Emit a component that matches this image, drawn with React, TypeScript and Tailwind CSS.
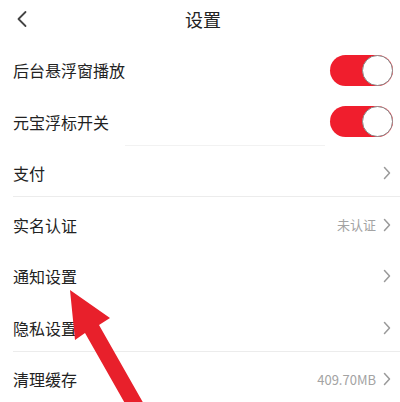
import React from "react";

const font = { fontFamily: '"Noto Sans CJK SC", "Noto Sans", sans-serif' };

function Chevron() {
  return (
    <svg width="10" height="14" viewBox="0 0 10 14" className="shrink-0">
      <path d="M2.5 1.5 L7.5 7 L2.5 12.5" fill="none" stroke="#9a9a9a" strokeWidth="1.5" strokeLinecap="round" strokeLinejoin="round" />
    </svg>
  );
}

function Toggle() {
  return (
    <div className="relative w-[63px] h-[31px] rounded-full bg-[#f01e2d]">
      <div className="absolute right-0 top-0 w-[31px] h-[31px] rounded-full bg-white border border-[#8a8a8a]" />
    </div>
  );
}

function Row({ label, right, divider }: { label: string; right: React.ReactNode; divider?: "full" | "faint" }) {
  return (
    <div className="relative h-[51.5px] flex items-center justify-between pl-[13px] pr-[8px]">
      <span className="text-[16px] text-[#222]">{label}</span>
      {right}
      {divider === "full" && <div className="absolute left-[13px] right-0 bottom-[2px] h-[1px] bg-[#ececec]" />}
      {divider === "faint" && <div className="absolute left-[125px] right-[75px] bottom-[2px] h-[1px] bg-[#f2f2f2]" />}
    </div>
  );
}

function Link({ value }: { value?: string }) {
  return (
    <div className="flex items-center gap-[6px]">
      {value && <span className="text-[13px] text-[#a3a3a3]">{value}</span>}
      <Chevron />
    </div>
  );
}

export default function App() {
  return (
    <div className="relative w-[400px] h-[402px] bg-white overflow-hidden" style={font}>
      <div className="relative h-[44.5px]">
        <div className="h-[38px] flex items-center pl-[15px]">
          <svg width="14" height="18" viewBox="0 0 14 18">
            <path d="M10.5 2 L3.5 9 L10.5 16" fill="none" stroke="#444" strokeWidth="1.8" strokeLinecap="round" strokeLinejoin="round" />
          </svg>
        </div>
        <div className="absolute left-0 right-0 top-0 h-[38px] flex items-center justify-center pl-[6px]">
          <span className="text-[18px] text-[#222]">设置</span>
        </div>
      </div>
      <div>
        <Row label="后台悬浮窗播放" right={<div className="mr-[-1px]"><Toggle /></div>} />
        <Row label="元宝浮标开关" right={<div className="mr-[-1px]"><Toggle /></div>} divider="faint" />
        <Row label="支付" right={<Link />} divider="full" />
        <Row label="实名认证" right={<Link value="未认证" />} />
        <Row label="通知设置" right={<Link />} />
        <Row label="隐私设置" right={<Link />} divider="full" />
        <Row label="清理缓存" right={<Link value="409.70MB" />} />
      </div>
      <svg className="absolute inset-0 pointer-events-none" width="400" height="402" viewBox="0 0 400 402">
        <path d="M70 290 L110 318 L99 325 L145 406 L131 414 L85 333 L75 340 Z" fill="#e8202b" />
      </svg>
    </div>
  );
}
